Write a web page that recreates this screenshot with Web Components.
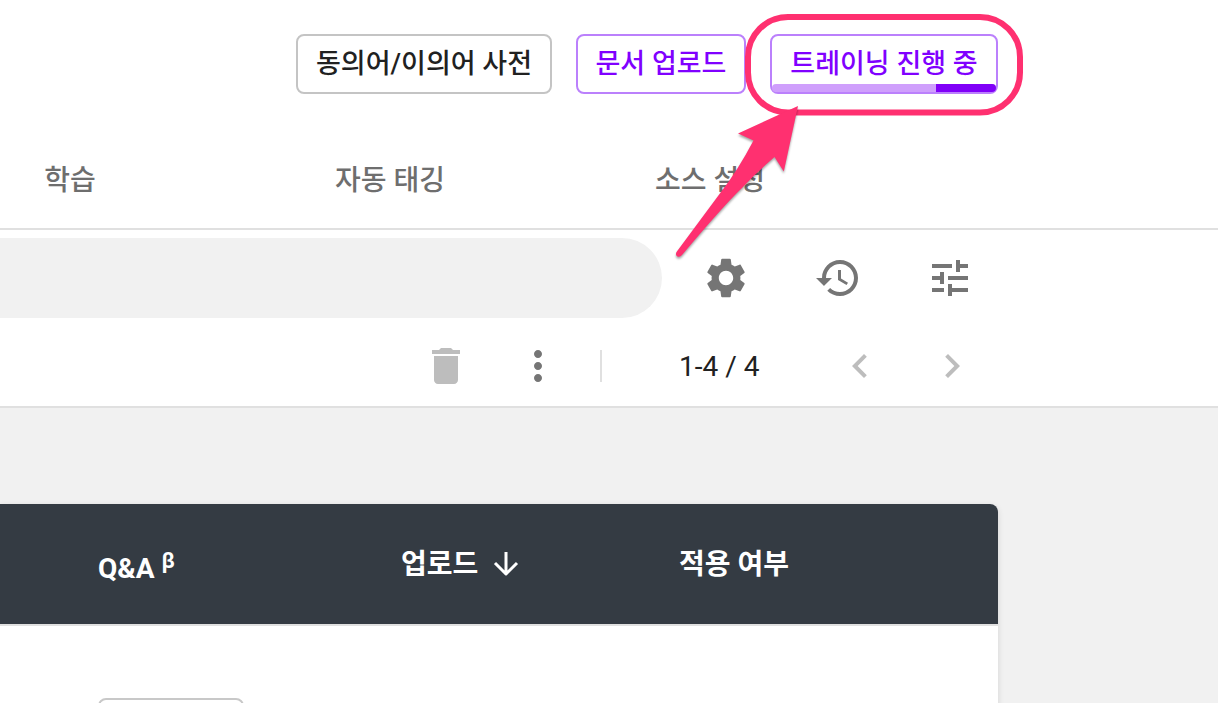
<!DOCTYPE html>
<html lang="ko">
<head>
<meta charset="utf-8">
<meta name="viewport" content="width=device-width, initial-scale=1">
<title>문서 관리</title>
<style>
  body { margin: 0; background: #fff; color: #212121; font-family: Roboto, "Noto Sans CJK KR", sans-serif; font-size: 28px; font-weight: 500; }
</style>
</head>
<body>
<doc-app></doc-app>
<script>
const define = (name, html) => {
  const template = document.createElement('template');
  template.innerHTML = html;
  customElements.define(name, class extends HTMLElement {
    constructor() {
      super();
      this.attachShadow({ mode: 'open' }).append(template.content.cloneNode(true));
    }
  });
};

define('outline-button', `
  <style>
    :host { display: block; position: relative; --line: #c4c4c4; --ink: #212121; }
    :host([accent]) { --line: #bb80fc; --ink: #8000ff; }
    button { box-sizing: border-box; width: 100%; height: 60px; padding: 0; border: 2px solid var(--line); border-radius: 8px; background: #fff; color: var(--ink); font: inherit; font-size: 27px; line-height: 40px; white-space: nowrap; display: block; }
  </style>
  <button type="button"><slot></slot></button>
  <slot name="bar"></slot>`);

define('training-bar', `
  <style>
    :host { display: block; position: absolute; left: 2px; right: 2px; bottom: 2px; height: 8px; border-radius: 4px; overflow: hidden; background: #cf9ffc; }
    span { display: block; width: 27%; height: 100%; margin-left: auto; background: #8000f8; }
  </style>
  <span role="progressbar" aria-label="트레이닝"></span>`);

define('callout-arrow', `
  <style>
    :host { display: block; position: absolute; left: -100px; top: -34px; width: 360px; height: 270px; z-index: 5; pointer-events: none; }
    svg { display: block; overflow: visible; }
    path { filter: drop-shadow(0 2px 1px rgba(0,0,0,.35)); }
  </style>
  <svg width="360" height="270" viewBox="670 0 360 270" aria-hidden="true">
    <rect x="748" y="17" width="272" height="95.500" rx="40" fill="none" stroke="#ff3070" stroke-width="6"/>
    <path fill="#ff3070" d="M798 106 L738 133.500 L753.500 140.500 Q738 170 721 192 L676.500 252 Q675 255.500 677.500 256.500 Q680 257.500 682 255 Q724 205 742 188 Q756 173 774.500 157 L783.800 171.500 Z"/>
  </svg>`);

define('action-bar', `
  <style>
    :host { display: flex; justify-content: flex-end; gap: 24px; padding: 34px 220px 34px 0; }
    .wide { width: 256px; } .mid { width: 170px; } .train { width: 228px; }
    outline-button { flex: none; }
  </style>
  <outline-button class="wide">동의어/이의어 사전</outline-button>
  <outline-button class="mid" accent>문서 업로드</outline-button>
  <outline-button class="train" accent>트레이닝 진행 중
    <training-bar slot="bar"></training-bar>
    <callout-arrow slot="bar"></callout-arrow>
  </outline-button>`);

define('tab-nav', `
  <style>
    :host { display: block; border-bottom: 2px solid #e0e0e0; }
    nav { display: grid; grid-template-columns: repeat(3, 1fr); margin: 0 348px 0 -90px; height: 100px; }
    a { color: #6e6e6e; text-decoration: none; text-align: center; line-height: 106px; white-space: nowrap; }
  </style>
  <nav><a href="#learn">학습</a><a href="#tagging">자동 태깅</a><a href="#source">소스 설정</a></nav>`);

const glyphs = {
  settings: 'M19.140 12.940c.04-.3.06-.61.06-.94 0-.32-.02-.64-.07-.94l2.030-1.580c.18-.14.23-.41.12-.61l-1.920-3.320c-.12-.22-.37-.29-.59-.22l-2.390.96c-.5-.38-1.030-.7-1.620-.94l-.36-2.540c-.04-.24-.24-.41-.48-.41h-3.840c-.24 0-.43.17-.47.41l-.36 2.540c-.59.24-1.130.57-1.620.94l-2.390-.96c-.22-.08-.47 0-.59.22L2.740 8.870c-.12.21-.08.47.12.61l2.030 1.580c-.05.3-.09.63-.09.94s.02.64.07.94l-2.030 1.580c-.18.14-.23.41-.12.61l1.920 3.320c.12.22.37.29.59.22l2.390-.96c.5.38 1.030.7 1.620.94l.36 2.540c.05.24.24.41.48.41h3.840c.24 0 .44-.17.47-.41l.36-2.540c.59-.24 1.130-.56 1.620-.94l2.390.96c.22.08.47 0 .59-.22l1.920-3.320c.12-.22.07-.47-.12-.61l-2.010-1.580zM12 15.600c-1.980 0-3.600-1.620-3.600-3.600s1.620-3.600 3.600-3.600 3.600 1.620 3.600 3.600-1.620 3.600-3.600 3.600z',
  history: 'M13 3c-4.970 0-9 4.030-9 9H1l3.890 3.890.07.14L9 12H6c0-3.870 3.130-7 7-7s7 3.130 7 7-3.130 7-7 7c-1.930 0-3.680-.79-4.940-2.060l-1.420 1.420C8.270 19.990 10.510 21 13 21c4.970 0 9-4.030 9-9s-4.030-9-9-9zm-1 5v5l4.280 2.540.72-1.210-3.500-2.080V8H12z',
  tune: 'M3 17v2h6v-2H3zM3 5v2h10V5H3zm10 16v-2h8v-2h-8v-2h-2v6h2zM7 9v2H3v2h4v2h2V9H7zm14 4v-2H11v2h10zm-6-4h2V7h4V5h-4V3h-2v6z',
  trash: 'M6 19c0 1.100.9 2 2 2h8c1.100 0 2-.9 2-2V7H6v12zM19 4h-3.500l-1-1h-5l-1 1H5v2h14V4z',
  more: 'M12 8c1.100 0 2-.9 2-2s-.9-2-2-2-2 .9-2 2 .9 2 2 2zm0 2c-1.100 0-2 .9-2 2s.9 2 2 2 2-.9 2-2-.9-2-2-2zm0 6c-1.100 0-2 .9-2 2s.9 2 2 2 2-.9 2-2-.9-2-2-2z',
  prev: 'M15.410 7.410 14 6l-6 6 6 6 1.410-1.410L10.830 12z',
  next: 'M10 6 8.590 7.410 13.170 12l-4.580 4.590L10 18l6-6z'
};
customElements.define('icon-button', class extends HTMLElement {
  constructor() {
    super();
    this.attachShadow({ mode: 'open' });
  }
  connectedCallback() {
    this.shadowRoot.innerHTML = `
      <style>
        :host { display: block; flex: none; }
        button { display: block; width: 48px; height: 48px; padding: 0; border: 0; background: none; color: #757575; }
        button:disabled { color: #bdbdbd; }
        svg { display: block; }
      </style>
      <button type="button" aria-label="${this.getAttribute('label')}"${this.hasAttribute('disabled') ? ' disabled' : ''}>
        <svg width="48" height="48" viewBox="0 0 24 24" fill="currentColor" aria-hidden="true"><path d="${glyphs[this.getAttribute('glyph')]}"/></svg>
      </button>`;
  }
});

define('tool-area', `
  <style>
    :host { display: block; padding-top: 8px; border-bottom: 2px solid #e0e0e0; }
    .row { display: flex; align-items: center; justify-content: flex-end; box-sizing: border-box; }
    .find { gap: 64px; height: 80px; padding-right: 244px; }
    .list { height: 88px; padding: 8px 242px 0 0; }
    input { flex: 1; min-width: 0; height: 80px; box-sizing: border-box; border: 0; border-radius: 0 40px 40px 0; margin-right: -24px; padding: 0 40px; background: #f1f1f1; font: inherit; outline: 0; }
    .divider { width: 2px; height: 32px; margin: 0 77px 0 38px; background: #e0e0e0; }
    .gap { margin-right: 44px; }
    .count { width: 84px; margin-right: 73px; white-space: nowrap; font-weight: 400; }
  </style>
  <div class="row find">
    <input type="search" aria-label="검색">
    <icon-button glyph="settings" label="설정"></icon-button>
    <icon-button glyph="history" label="기록"></icon-button>
    <icon-button glyph="tune" label="필터"></icon-button>
  </div>
  <div class="row list">
    <icon-button class="gap" glyph="trash" label="삭제" disabled></icon-button>
    <icon-button glyph="more" label="더 보기"></icon-button>
    <span class="divider"></span>
    <span class="count">1-4 / 4</span>
    <icon-button class="gap" glyph="prev" label="이전" disabled></icon-button>
    <icon-button glyph="next" label="다음" disabled></icon-button>
  </div>`);

define('doc-table', `
  <style>
    :host { display: block; margin-right: 220px; border-radius: 0 8px 8px 0; background: #fff; box-shadow: 0 2px 6px rgba(0,0,0,.12); }
    table { width: 100%; table-layout: fixed; border-collapse: separate; border-spacing: 0; }
    th { box-sizing: border-box; height: 122px; padding: 2px 0 0; background: #343b43; background-clip: padding-box; border-bottom: 2px solid #e0e0e0; color: #fff; font-weight: 700; text-align: left; white-space: nowrap; line-height: 40px; }
    th:last-child { border-top-right-radius: 8px; }
    th:first-child, td:first-child { padding-left: 98px; }
    .qa { width: 401px; } .up { width: 278px; }
    .label { display: flex; align-items: center; gap: 15px; }
    .name { padding-top: 8px; }
    sup { font-size: 22px; line-height: 20px; }
    td { height: 200px; padding: 72px 0 0; vertical-align: top; box-sizing: border-box; }
    td button { display: block; width: 146px; height: 60px; border: 2px solid #c8c8c8; border-radius: 8px; background: #fff; }
  </style>
  <table>
    <thead><tr>
      <th class="qa" scope="col"><div class="name">Q&amp;A <sup>β</sup></div></th>
      <th class="up" scope="col"><div class="label">업로드
        <svg width="26" height="26" viewBox="0 0 26 26" fill="none" stroke="#fff" stroke-width="3" stroke-linejoin="round" aria-hidden="true"><path d="M13 0v22M2 11l11 11 11-11"/></svg></div></th>
      <th scope="col">적용 여부</th>
    </tr></thead>
    <tbody><tr><td><button type="button" aria-label="Q&amp;A"></button></td><td></td><td></td></tr></tbody>
  </table>`);

define('doc-app', `
  <style>
    :host { display: flex; flex-direction: column; height: 100vh; overflow: hidden; }
    action-bar, tab-nav, tool-area { flex: none; }
    main { flex: 1; min-height: 0; overflow: hidden; padding-top: 96px; background: #f1f1f1; }
  </style>
  <action-bar></action-bar>
  <tab-nav></tab-nav>
  <tool-area></tool-area>
  <main><doc-table></doc-table></main>`);
</script>
</body>
</html>
